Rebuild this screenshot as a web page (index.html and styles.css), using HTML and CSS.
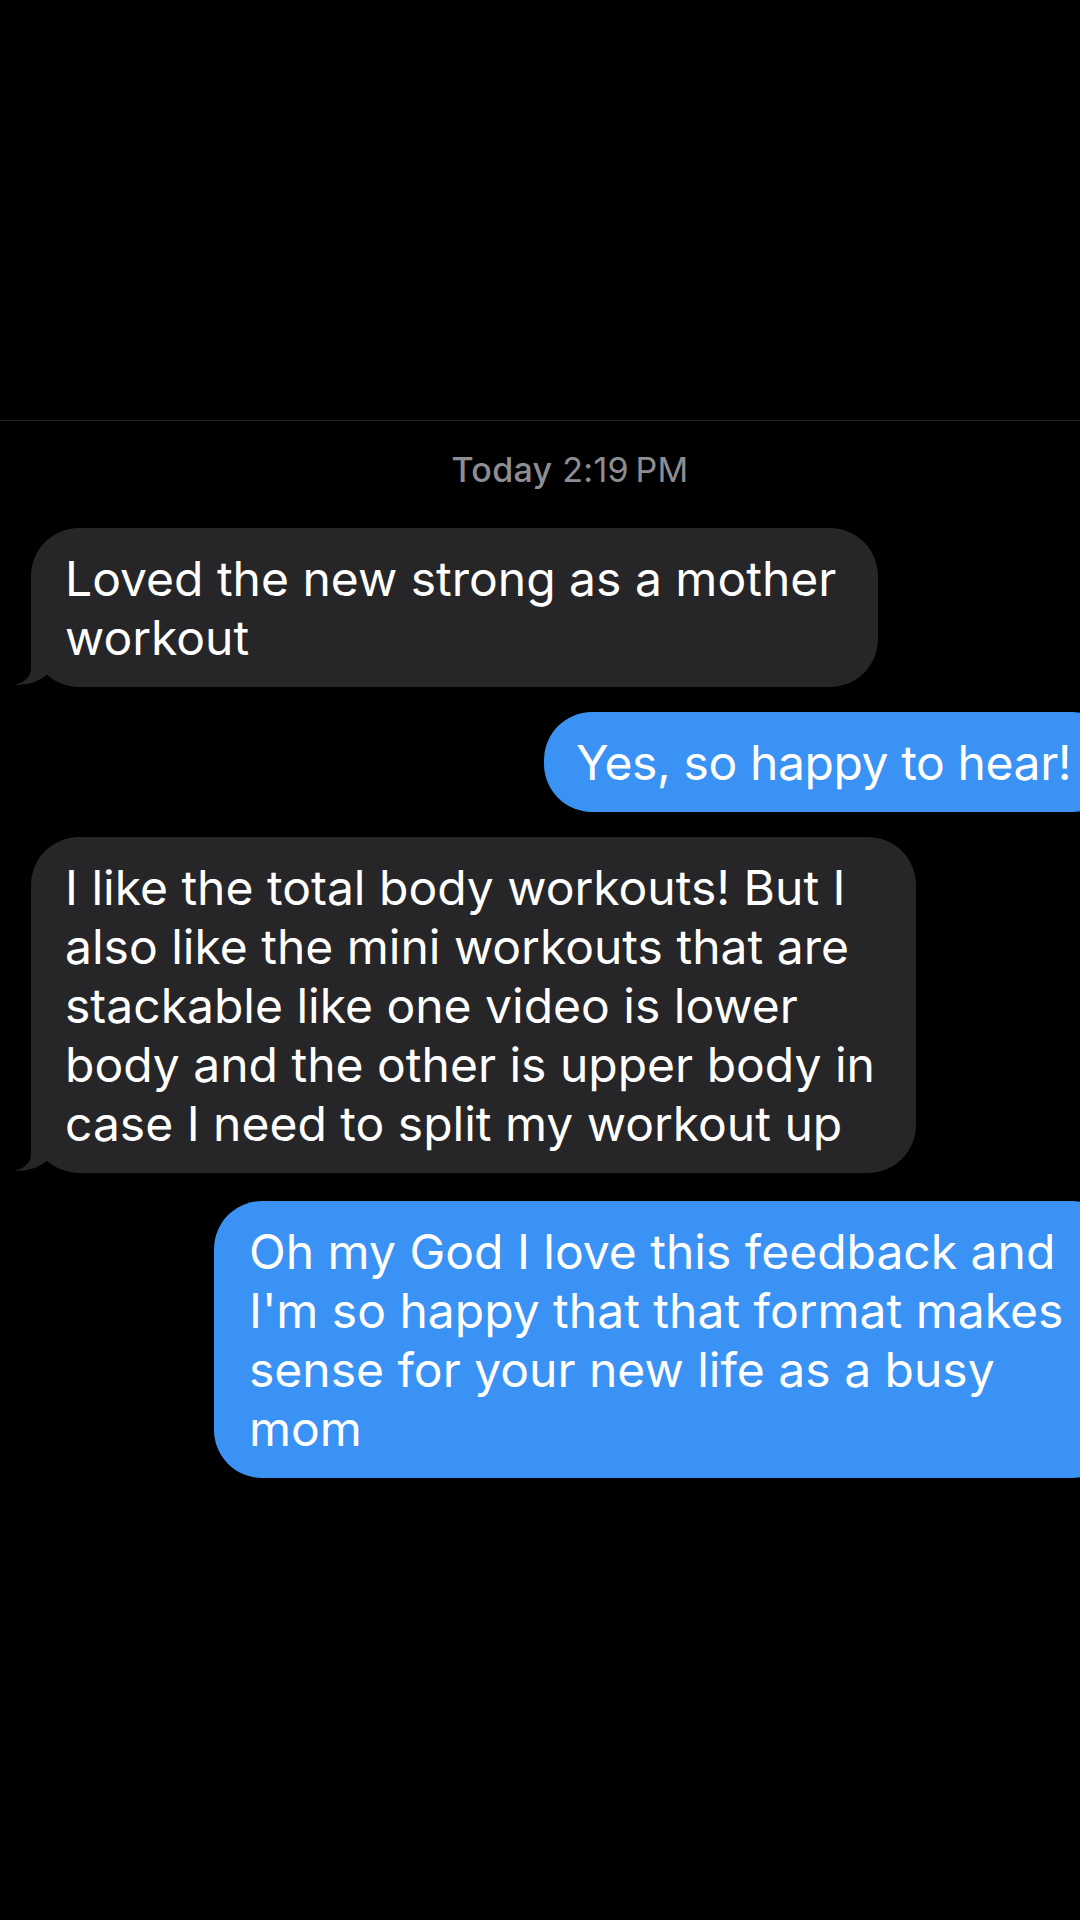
FILE: index.html
```html
<!DOCTYPE HTML>
<html>

<head>
    <meta charset="utf-8">
    <title>Messages</title>
    <link rel="stylesheet" href="styles.css">
</head>

<body>
    <div class="screen">
        <div class="top-space"></div>
        <div class="thread">
            <div class="stamp"><span class="day">Today</span> 2:19&#8201;PM</div>

            <div class="bubble in b-first">
                Loved the new strong as a mother<br>workout
                <svg class="tail" viewBox="0 0 50 70" width="50" height="70">
                    <path d="M20 0 L20 52 Q19 64 3 68 Q24 69 38 56 L38 0 Z" />
                </svg>
            </div>

            <div class="bubble out b-yes">Yes, so happy to hear!</div>

            <div class="bubble in b-long">
                I like the total body workouts! But I<br>
                also like the mini workouts that are<br>
                stackable like one video is lower<br>
                body and the other is upper body in<br>
                case I need to split my workout up
                <svg class="tail" viewBox="0 0 50 70" width="50" height="70">
                    <path d="M20 0 L20 52 Q19 64 3 68 Q24 69 38 56 L38 0 Z" />
                </svg>
            </div>

            <div class="bubble out b-reply">
                Oh my God I love this feedback and<br>
                I'm so happy that that format makes<br>
                sense for your new life as a busy<br>
                mom
            </div>
        </div>
    </div>
</body>

</html>
```

FILE: styles.css
```css
/* 全局样式 */
* {
    box-sizing: border-box;
}

body {
    margin: 0;
    background-color: #000;
    font-family: Inter, "Noto Sans", Arial, sans-serif;
    color: #fff;
}

.screen {
    width: 1080px;
    height: 1920px;
    overflow: hidden;
}

.top-space {
    height: 421px;
    border-bottom: 1px solid #232325;
}

/* 会话 */
.thread {
    display: flex;
    flex-direction: column;
    align-items: flex-start;
    gap: 25px;
}

.stamp {
    align-self: stretch;
    text-align: center;
    padding: 29px 0 0 60px;
    margin-bottom: 13px;
    font-size: 34px;
    line-height: 40px;
    letter-spacing: 0.3px;
    color: #8e8e92;
}

.stamp .day {
    font-weight: 500;
}

/* 气泡 */
.bubble {
    position: relative;
    font-size: 48px;
    line-height: 59px;
    padding: 21px 30px 20px 34px;
    border-radius: 48px;
    white-space: nowrap;
}

.bubble.in {
    background-color: #262628;
    margin-left: 31px;
}

.bubble.out {
    background-color: #3a93f4;
    align-self: flex-end;
    margin-right: -40px;
}

.tail {
    position: absolute;
    left: -20px;
    bottom: 0;
    fill: #262628;
}

.b-first {
    width: 847px;
}

.b-long {
    width: 885px;
}

.b-yes {
    width: 576px;
    padding-left: 32px;
    letter-spacing: -0.4px;
}

.b-reply {
    width: 906px;
    margin-top: 3px;
    padding-left: 35px;
}
```
